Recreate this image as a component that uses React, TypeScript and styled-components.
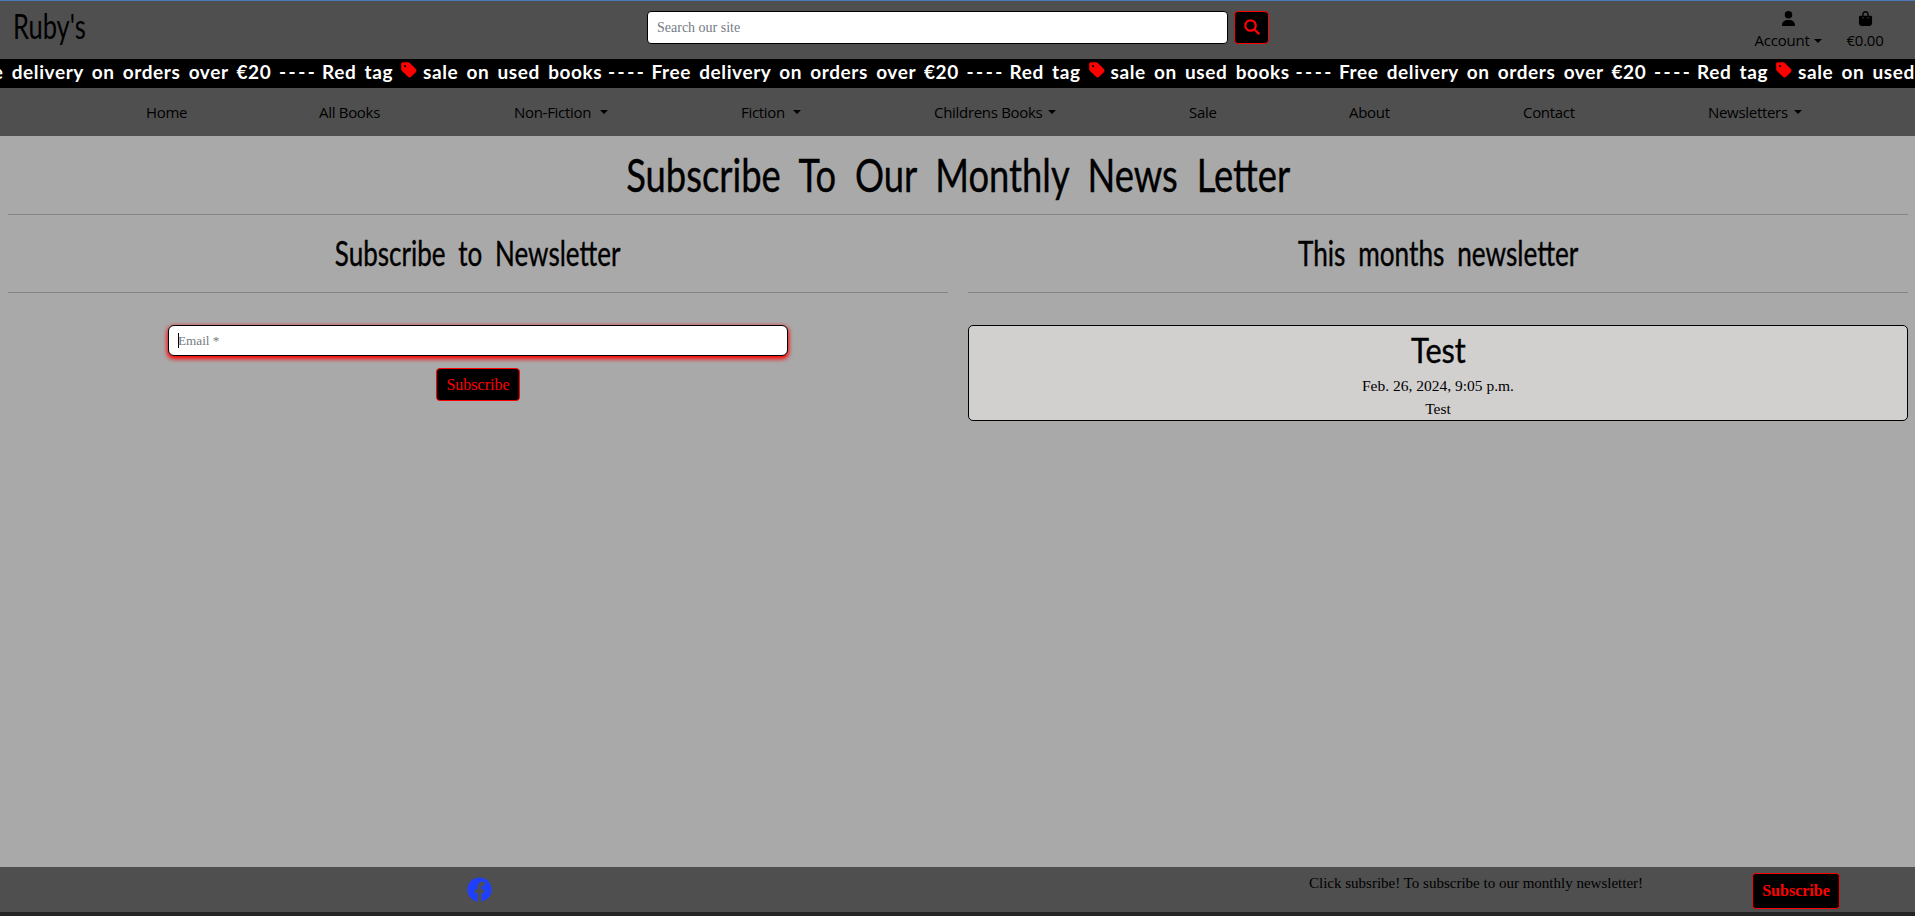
import React from "react";
import styled, { createGlobalStyle } from "styled-components";
import { FaUser, FaBagShopping, FaTag } from "react-icons/fa6";
import { FaFacebook } from "react-icons/fa";

const hand = `Lato, "Liberation Sans", sans-serif`;
const slab = `"Liberation Serif", serif`;
const ui = `"Open Sans", "Noto Sans", sans-serif`;

const GlobalStyle = createGlobalStyle`
  *, *::before, *::after { box-sizing: border-box; }
  html, body { margin: 0; padding: 0; overflow: hidden; }
  body { background: #a9a9a9; color: #000; font-family: ${slab}; font-size: 16px; line-height: 24px; }
  h1, h2, h3, p { margin: 0; font-weight: 400; }
`;

const Page = styled.div`
  height: 916px;
  display: flex;
  flex-direction: column;
  border-top: 1px solid #4a7ab5;
`;

const TopBar = styled.header`
  height: 58px;
  background: #4f4f4f;
  display: grid;
  grid-template-columns: 647px 622px 1fr;
`;

const Script = styled.span<{ $x: number; $gap?: number; $left?: boolean; $heavy?: boolean }>`
  display: inline-block;
  white-space: nowrap;
  word-spacing: ${(p) => p.$gap ?? 0}px;
  transform: scaleX(${(p) => p.$x});
  transform-origin: ${(p) => (p.$left ? "left" : "center")};
  -webkit-text-stroke: ${(p) => (p.$heavy ? 0.4 : 0)}px currentColor;
`;

const Brand = styled.a`
  padding: 4px 0 0 13px;
  font: 400 34px/41px ${hand};
`;

const SearchForm = styled.form`
  display: flex;
  gap: 6px;
  padding-top: 10px;
`;

const Field = styled.div<{ $focus?: boolean }>`
  display: flex;
  align-items: center;
  height: ${(p) => (p.$focus ? 31 : 33)}px;
  width: ${(p) => (p.$focus ? 620 : 581)}px;
  padding: 0 9px;
  border: 1px solid #000;
  border-radius: ${(p) => (p.$focus ? 6 : 4)}px;
  background: #fff;
  color: #737b83;
  font-size: ${(p) => (p.$focus ? 13.2 : 14)}px;
  box-shadow: ${(p) => (p.$focus ? "0 2px 4px 1px #f00" : "none")};
`;

const Caret = styled.i`
  width: 1px;
  height: 15px;
  margin-right: -1px;
  background: #000;
`;

const Button = styled.button<{ $w: number; $h: number; $bold?: boolean }>`
  display: flex;
  align-items: center;
  justify-content: center;
  width: ${(p) => p.$w}px;
  height: ${(p) => p.$h}px;
  padding: 0;
  border: 1px solid #f00;
  border-radius: 4px;
  background: #000;
  color: #f00;
  font: ${(p) => (p.$bold ? 700 : 400)} 16px/24px ${slab};
  svg { margin-bottom: 2px; }
`;

const Tools = styled.div`
  display: flex;
  justify-content: flex-end;
  gap: 26px;
  padding: 10px 32px 0 0;
  font-family: ${ui};
`;

const Tool = styled.div<{ $w: number }>`
  display: flex;
  flex-direction: column;
  align-items: center;
  width: ${(p) => p.$w}px;
  font-size: 15px;
  letter-spacing: -0.2px;
  svg { height: 15px; width: 15px; margin-bottom: 3px; }
`;

const Label = styled.span`
  display: flex;
  align-items: center;
  line-height: 23px;
  white-space: nowrap;
`;

const Arrow = styled.i<{ $gap: number }>`
  flex: none;
  margin-left: ${(p) => p.$gap}px;
  border: 4px solid transparent;
  border-top-color: currentColor;
  border-bottom: 0;
`;

const Banner = styled.div`
  height: 29px;
  background: #000;
  color: #fff;
  overflow: hidden;
  display: flex;
  font: 700 19px/26px ${hand};
  letter-spacing: 0.6px;
  word-spacing: 3px;
`;

const Strip = styled.div`
  display: flex;
  flex: none;
  margin-left: -36px;
`;

const Message = styled.div`
  flex: none;
  width: 687.5px;
  display: grid;
  grid-template-columns: 315px 43px 78px 23px 185px 1fr;
  white-space: pre;
  svg { width: 18px; height: 18px; color: #f00; margin-top: 2px; }
`;

const Dashes = styled.span`
  letter-spacing: 2.5px;
`;

const Nav = styled.nav`
  height: 48px;
  background: #4f4f4f;
  display: flex;
  justify-content: space-between;
  align-items: center;
  padding: 0 113px 0 146px;
  font: 400 15px/24px ${ui};
  letter-spacing: -0.3px;
`;

const NavItem = styled.a<{ $w: number }>`
  display: flex;
  align-items: center;
  justify-content: space-between;
  width: ${(p) => p.$w}px;
  white-space: nowrap;
`;

const Main = styled.main`
  flex: 1;
  padding: 0 7px 0 8px;
  text-align: center;
`;

const Title = styled.h1`
  height: 78px;
  font: 400 46px/77px ${hand};
`;

const Rule = styled.hr`
  width: 100%;
  margin: 0;
  border: 0;
  height: 1px;
  background: #858585;
`;

const Columns = styled.div`
  display: grid;
  grid-template-columns: 940px 940px;
  justify-content: space-between;
`;

const Column = styled.section`
  display: flex;
  flex-direction: column;
`;

const Heading = styled.h2`
  height: 77px;
  font: 400 34px/75px ${hand};
`;

const Form = styled.form`
  display: flex;
  flex-direction: column;
  align-items: center;
  gap: 12px;
  padding-top: 32px;
`;

const Card = styled.article`
  height: 96px;
  margin-top: 32px;
  border: 1px solid #000;
  border-radius: 5px;
  background: #d1d0cf;
  font-size: 15.5px;
  line-height: 23px;
`;

const CardTitle = styled.h3`
  height: 48px;
  font: 400 34px/48px ${hand};
`;

const Footer = styled.footer`
  height: 49px;
  display: grid;
  grid-template-columns: 467px 842px 443px 1fr;
  background: #4f4f4f;
  border-bottom: 4px solid #242424;
`;

const Social = styled.a`
  grid-column: 2;
  padding-top: 10px;
  color: #1f3fff;
  svg { display: block; width: 25px; height: 25px; }
`;

const Note = styled.p`
  padding-top: 4px;
  font-size: 15px;
`;

const FooterAction = styled.div`
  padding-top: 6px;
`;

const SearchIcon = () => (
  <svg width="16" height="16" viewBox="0 0 16 16" fill="none" stroke="currentColor" strokeWidth="2.3">
    <circle cx="6.5" cy="6.5" r="5.2" />
    <path d="M10.2 10.2 15.2 15.2" />
  </svg>
);

const links: [string, number, boolean][] = [
  ["Home", 40, false],
  ["All Books", 62, false],
  ["Non-Fiction", 94, true],
  ["Fiction", 60, true],
  ["Childrens Books", 122, true],
  ["Sale", 27, false],
  ["About", 41, false],
  ["Contact", 52, false],
  ["Newsletters", 94, true],
];

export default function App() {
  return (
    <>
      <GlobalStyle />
      <Page>
        <TopBar>
          <Brand><Script $left $x={0.75}>Ruby's</Script></Brand>
          <SearchForm>
            <Field>Search our site</Field>
            <Button type="button" $w={35} $h={33} aria-label="Search"><SearchIcon /></Button>
          </SearchForm>
          <Tools>
            <Tool $w={66}><FaUser /><Label>Account<Arrow $gap={4} /></Label></Tool>
            <Tool $w={36}><FaBagShopping /><Label>€0.00</Label></Tool>
          </Tools>
        </TopBar>
        <Banner>
          <Strip>
            {[0, 1, 2].map((n) => (
              <Message key={n}>
                <span>Free delivery on orders over €20</span>
                <Dashes>----</Dashes>
                <span>Red tag</span>
                <FaTag />
                <span>sale on used books</span>
                <Dashes>----</Dashes>
              </Message>
            ))}
          </Strip>
        </Banner>
        <Nav>
          {links.map(([text, width, menu]) => (
            <NavItem key={text} $w={width}>
              {text}
              {menu && <Arrow $gap={0} />}
            </NavItem>
          ))}
        </Nav>
        <Main>
          <Title><Script $heavy $x={0.79} $gap={12}>Subscribe To Our Monthly News Letter</Script></Title>
          <Rule />
          <Columns>
            <Column>
              <Heading><Script $heavy $x={0.765} $gap={8}>Subscribe to Newsletter</Script></Heading>
              <Rule />
              <Form>
                <Field $focus><Caret />Email *</Field>
                <Button type="button" $w={84} $h={33}>Subscribe</Button>
              </Form>
            </Column>
            <Column>
              <Heading><Script $heavy $x={0.77} $gap={8}>This months newsletter</Script></Heading>
              <Rule />
              <Card>
                <CardTitle><Script $heavy $x={0.9}>Test</Script></CardTitle>
                <p>Feb. 26, 2024, 9:05 p.m.</p>
                <p>Test</p>
              </Card>
            </Column>
          </Columns>
        </Main>
        <Footer>
          <Social><FaFacebook /></Social>
          <Note>Click subsribe! To subscribe to our monthly newsletter!</Note>
          <FooterAction><Button type="button" $w={88} $h={36} $bold>Subscribe</Button></FooterAction>
        </Footer>
      </Page>
    </>
  );
}
